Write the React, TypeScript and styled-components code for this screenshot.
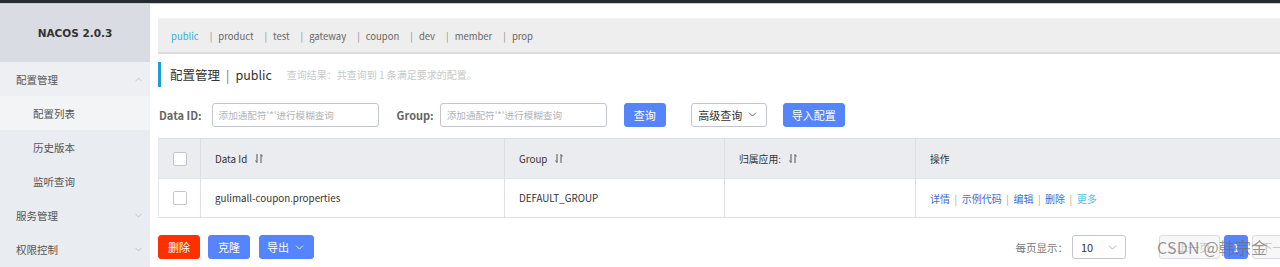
import * as React from "react";
import styled, { createGlobalStyle } from "styled-components";
import { ChevronDown, ChevronUp } from "lucide-react";

const GlobalStyle = createGlobalStyle`
  html, body {
    margin: 0;
    padding: 0;
    background: #ffffff;
  }
  body {
    font-family: "Noto Sans CJK SC", "Noto Sans", sans-serif;
    color: #333333;
  }
  * {
    box-sizing: border-box;
  }
`;

const SPage = styled.div`
  width: 1280px;
  height: 267px;
  overflow: hidden;
  display: flex;
  flex-direction: column;
`;

const STopBar = styled.div`
  height: 4px;
  background: #262b31;
  border-bottom: 1px solid #c9ced4;
  flex: none;
`;

const SLayout = styled.div`
  flex: 1;
  display: flex;
  min-height: 0;
`;

const SSidebar = styled.div`
  width: 150px;
  flex: none;
  background: #e9ecf0;
  display: flex;
  flex-direction: column;
`;

const SLogo = styled.div`
  height: 58px;
  flex: none;
  background: #d9dde3;
  display: flex;
  align-items: center;
  justify-content: center;
  font-family: "DejaVu Sans", sans-serif;
  font-weight: bold;
  font-size: 10.5px;
  color: #333;
`;

interface IMenuProps {
  sub?: boolean;
  active?: boolean;
  open?: boolean;
}

const SMenuItem = styled.div<IMenuProps>`
  height: 34px;
  flex: none;
  display: flex;
  align-items: center;
  justify-content: space-between;
  padding: 0 6px 0 ${({ sub }) => (sub ? "33px" : "16px")};
  font-size: 10.5px;
  color: #555;
  background: ${({ active, open }) =>
    active ? "#f3f4f6" : open ? "#edeff3" : "transparent"};
  & svg {
    color: #a0a4aa;
  }
`;

const SMain = styled.div`
  flex: none;
  width: 1162px;
  padding: 14px 0 0 8px;
  display: flex;
  flex-direction: column;
`;

const STabBar = styled.div`
  height: 36px;
  flex: none;
  background: #eeeeee;
  border-bottom: 2px solid #dcdcdc;
  border-top: 1px solid #f2f2f2;
  display: flex;
  align-items: center;
  padding-left: 13px;
  font-size: 9.5px;
  gap: 11px;
`;

const STab = styled.span<{ active?: boolean }>`
  color: ${({ active }) => (active ? "#2fb0e0" : "#666")};
  white-space: nowrap;
`;

const STabSep = styled.span`
  color: #8a8a9c;
  margin-right: 6px;
`;

const STitleRow = styled.div`
  margin-top: 8px;
  height: 25px;
  flex: none;
  border-left: 3px solid #1a9cd8;
  display: flex;
  align-items: center;
  padding-left: 9px;
`;

const STitle = styled.span`
  font-size: 12.5px;
  color: #333;
  & b {
    font-weight: normal;
    color: #8a6a40;
    margin: 0 6px;
  }
`;

const STitleNote = styled.span`
  font-size: 10px;
  color: #c8c8c8;
  margin-left: 15px;
`;

const SSearchRow = styled.div`
  margin-top: 15px;
  height: 25px;
  flex: none;
  display: flex;
  align-items: center;
  padding: 0 24px 0 1px;
`;

const SLabel = styled.span<{ gapLeft?: number; gapRight?: number }>`
  font-size: 11px;
  font-weight: bold;
  color: #666;
  margin-left: ${({ gapLeft }) => gapLeft || 0}px;
  margin-right: ${({ gapRight }) => gapRight ?? 10}px;
`;

const SInput = styled.div`
  width: 167px;
  height: 24px;
  border: 1px solid #c4c6cf;
  border-radius: 3px;
  display: flex;
  align-items: center;
  padding-left: 6px;
  font-size: 9.6px;
  color: #b4b4b4;
`;

interface IButtonProps {
  kind?: "primary" | "normal" | "danger";
  gapLeft?: number;
  w?: number;
}

const SButton = styled.div<IButtonProps>`
  height: 24px;
  width: ${({ w }) => (w ? `${w}px` : "auto")};
  margin-left: ${({ gapLeft }) => gapLeft || 0}px;
  border-radius: 3px;
  display: flex;
  align-items: center;
  justify-content: center;
  gap: 4px;
  font-size: 11px;
  background: ${({ kind }) =>
    kind === "danger" ? "#ff3000" : kind === "normal" ? "#ffffff" : "#5584ff"};
  color: ${({ kind }) => (kind === "normal" ? "#333" : "#ffffff")};
  border: 1px solid
    ${({ kind }) =>
      kind === "danger" ? "#ff3000" : kind === "normal" ? "#c4c6cf" : "#5584ff"};
`;

const SEdgeBox = styled.div`
  margin-left: auto;
  width: 4px;
  height: 32px;
  align-self: flex-start;
  margin-top: 3px;
  border: 1px solid #dcdcdc;
  border-right: none;
  background: #f6f6f6;
`;

const STable = styled.div`
  margin-top: 11px;
  flex: none;
  border-bottom: 1px solid #dcdee3;
  border-left: 1px solid #e4e6ea;
`;

const SRow = styled.div<{ head?: boolean }>`
  display: grid;
  grid-template-columns: 42px 304px 220px 191px 1fr;
  height: ${({ head }) => (head ? "40px" : "39px")};
  background: ${({ head }) => (head ? "#ebecf0" : "#ffffff")};
  border-top: ${({ head }) => (head ? "1px solid #dcdee3" : "1px solid #e1e3e7")};
`;

const SCell = styled.div<{ center?: boolean }>`
  display: flex;
  align-items: center;
  justify-content: ${({ center }) => (center ? "center" : "flex-start")};
  padding-left: ${({ center }) => (center ? "0" : "14px")};
  border-right: 1px solid #dcdee3;
  font-size: 9.8px;
  color: #333;
  white-space: nowrap;
  &:last-child {
    border-right: none;
  }
`;

const SCheckbox = styled.span`
  width: 14px;
  height: 14px;
  border: 1px solid #c4c6cf;
  border-radius: 2px;
  background: #fff;
  margin-left: 1px;
`;

const SSort = styled.svg`
  margin-left: 8px;
`;

const SAction = styled.span<{ more?: boolean }>`
  font-size: 10px;
  color: ${({ more }) => (more ? "#4cc2e8" : "#3b6fd4")};
`;

const SActionSep = styled.span`
  font-size: 10px;
  color: #c9a27a;
  margin: 0 4.5px;
`;

const SFooter = styled.div`
  margin-top: 17px;
  height: 24px;
  flex: none;
  display: flex;
  align-items: center;
`;

const SPageSize = styled.span`
  margin-left: auto;
  font-size: 10.5px;
  color: #777;
  margin-right: 4px;
`;

const SSelect = styled.div`
  width: 54px;
  height: 24px;
  border: 1px solid #c4c6cf;
  border-radius: 3px;
  display: flex;
  align-items: center;
  justify-content: space-between;
  padding: 0 6px 0 8px;
  font-size: 11px;
  color: #333;
  & svg {
    color: #888;
  }
`;

const SPager = styled.div`
  position: relative;
  margin-left: 33px;
  display: flex;
  align-items: center;
  gap: 4px;
  height: 24px;
`;

const SPageBtn = styled.div<{ current?: boolean; w: number }>`
  width: ${({ w }) => w}px;
  height: 24px;
  border-radius: 3px;
  border: 1px solid ${({ current }) => (current ? "#5584ff" : "#dcdee3")};
  background: ${({ current }) => (current ? "#5584ff" : "#f7f7f7")};
  color: ${({ current }) => (current ? "#fff" : "#c8c8c8")};
  font-size: 11px;
  display: flex;
  align-items: center;
  justify-content: center;
  flex: none;
`;

const SWatermark = styled.span`
  position: absolute;
  left: -2px;
  top: 0px;
  font-size: 16px;
  color: rgba(110, 110, 110, 0.72);
  white-space: nowrap;
  letter-spacing: 0.2px;
`;

const SortIcon = () => (
  <SSort width="8" height="11" viewBox="0 0 8 11">
    <path d="M2 1v8.5M0.3 7.5L2 9.5" stroke="#555" strokeWidth="1" fill="none" />
    <path d="M6 10V1.5M7.7 3.5L6 1.5" stroke="#555" strokeWidth="1" fill="none" />
  </SSort>
);

const tabs = ["product", "test", "gateway", "coupon", "dev", "member", "prop"];
const actions = ["详情", "示例代码", "编辑", "删除"];

const App = () => {
  return (
    <SPage>
      <GlobalStyle />
      <STopBar />
      <SLayout>
        <SSidebar>
          <SLogo>NACOS 2.0.3</SLogo>
          <SMenuItem open>
            配置管理
            <ChevronUp size={11} strokeWidth={1.2} />
          </SMenuItem>
          <SMenuItem sub active>
            配置列表
          </SMenuItem>
          <SMenuItem sub>历史版本</SMenuItem>
          <SMenuItem sub>监听查询</SMenuItem>
          <SMenuItem>
            服务管理
            <ChevronDown size={11} strokeWidth={1.2} />
          </SMenuItem>
          <SMenuItem>
            权限控制
            <ChevronDown size={11} strokeWidth={1.2} />
          </SMenuItem>
        </SSidebar>
        <SMain>
          <STabBar>
            <STab active>public</STab>
            {tabs.map((t) => (
              <STab key={t}>
                <STabSep>|</STabSep>
                {t}
              </STab>
            ))}
          </STabBar>
          <STitleRow>
            <STitle>
              配置管理<b>|</b>public
            </STitle>
            <STitleNote>查询结果：共查询到 1 条满足要求的配置。</STitleNote>
          </STitleRow>
          <SSearchRow>
            <SLabel>Data ID:</SLabel>
            <SInput>添加通配符'*'进行模糊查询</SInput>
            <SLabel gapLeft={18} gapRight={6}>
              Group:
            </SLabel>
            <SInput>添加通配符'*'进行模糊查询</SInput>
            <SButton w={42} gapLeft={17}>
              查询
            </SButton>
            <SButton kind="normal" w={76} gapLeft={25}>
              高级查询
              <ChevronDown size={13} strokeWidth={1.3} />
            </SButton>
            <SButton w={62} gapLeft={16}>
              导入配置
            </SButton>
            <SEdgeBox />
          </SSearchRow>
          <STable>
            <SRow head>
              <SCell center>
                <SCheckbox />
              </SCell>
              <SCell>
                Data Id
                <SortIcon />
              </SCell>
              <SCell>
                Group
                <SortIcon />
              </SCell>
              <SCell>
                归属应用:
                <SortIcon />
              </SCell>
              <SCell>操作</SCell>
            </SRow>
            <SRow>
              <SCell center>
                <SCheckbox />
              </SCell>
              <SCell>gulimall-coupon.properties</SCell>
              <SCell>DEFAULT_GROUP</SCell>
              <SCell />
              <SCell>
                {actions.map((a) => (
                  <React.Fragment key={a}>
                    <SAction>{a}</SAction>
                    <SActionSep>|</SActionSep>
                  </React.Fragment>
                ))}
                <SAction more>更多</SAction>
              </SCell>
            </SRow>
          </STable>
          <SFooter>
            <SButton kind="danger" w={42}>
              删除
            </SButton>
            <SButton w={42} gapLeft={8}>
              克隆
            </SButton>
            <SButton w={55} gapLeft={9}>
              导出
              <ChevronDown size={13} strokeWidth={1.5} />
            </SButton>
            <SPageSize>每页显示：</SPageSize>
            <SSelect>
              10
              <ChevronDown size={13} strokeWidth={1.2} />
            </SSelect>
            <SPager>
              <SPageBtn w={61}>&lt; 上一页</SPageBtn>
              <SPageBtn current w={24}>
                1
              </SPageBtn>
              <SPageBtn w={60}>下一页 &gt;</SPageBtn>
              <SWatermark>CSDN @韩宗金</SWatermark>
            </SPager>
          </SFooter>
        </SMain>
      </SLayout>
    </SPage>
  );
};

export default App;
